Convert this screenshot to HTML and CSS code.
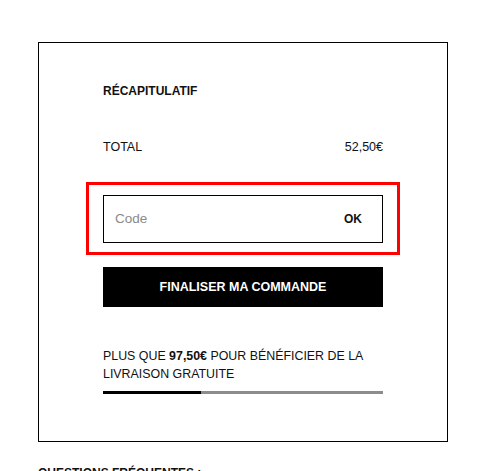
FILE: index.html
```html
<!DOCTYPE html>
<html lang="fr">
<head>
<meta charset="utf-8">
<link rel="stylesheet" href="styles.css">
</head>
<body>
<div class="page">
  <section class="summary">
    <h2 class="title">RÉCAPITULATIF</h2>
    <div class="total-row"><span>TOTAL</span><span>52,50€</span></div>
    <div class="code-outline">
      <div class="code-box">
        <span class="placeholder">Code</span>
        <span class="ok">OK</span>
      </div>
    </div>
    <button class="checkout">FINALISER MA COMMANDE</button>
    <p class="shipping">PLUS QUE <b>97,50€</b> POUR BÉNÉFICIER DE LA LIVRAISON GRATUITE</p>
    <div class="progress"><div class="progress-fill" style="width:35%"></div></div>
  </section>
  <h3 class="faq">QUESTIONS FRÉQUENTES :</h3>
</div>
</body>
</html>
```
FILE: styles.css
```css
html, body {
  margin: 0;
  padding: 0;
  background: #fff;
}
body {
  font-family: "Liberation Sans", Arial, sans-serif;
  color: #111;
  font-size: 12.5px;
  line-height: 18px;
}
.page {
  padding: 42px 0 0 38px;
}
.summary {
  box-sizing: border-box;
  width: 410px;
  height: 400px;
  border: 1px solid #000;
  padding: 39px 64px 0 64px;
}
.title {
  margin: 0;
  font-size: 12px;
  font-weight: bold;
  line-height: 18px;
}
.total-row {
  margin-top: 38px;
  display: flex;
  justify-content: space-between;
}
.code-outline {
  margin: 26px -17px 0 -17px;
  border: 3px solid #f00;
  padding: 10px 14px 9px 14px;
}
.code-box {
  box-sizing: border-box;
  height: 48px;
  border: 1px solid #000;
  display: flex;
  align-items: center;
  justify-content: space-between;
  padding: 0 20px 0 11px;
}
.placeholder {
  color: #8a8a8a;
  font-size: 13.5px;
}
.ok {
  font-weight: bold;
  font-size: 12px;
}
.checkout {
  display: block;
  width: 100%;
  height: 40px;
  margin-top: 12px;
  border: 0;
  background: #000;
  color: #fff;
  font-family: inherit;
  font-weight: bold;
  font-size: 12.5px;
  padding: 0;
}
.shipping {
  margin: 40px 0 0 0;
  font-size: 12.4px;
}
.progress {
  margin-top: 8px;
  height: 3px;
  background: #8c8c8c;
}
.progress-fill {
  height: 100%;
  background: #000;
}
.faq {
  margin: 22px 0 0 0;
  font-size: 12px;
  font-weight: bold;
  line-height: 18px;
}
```
